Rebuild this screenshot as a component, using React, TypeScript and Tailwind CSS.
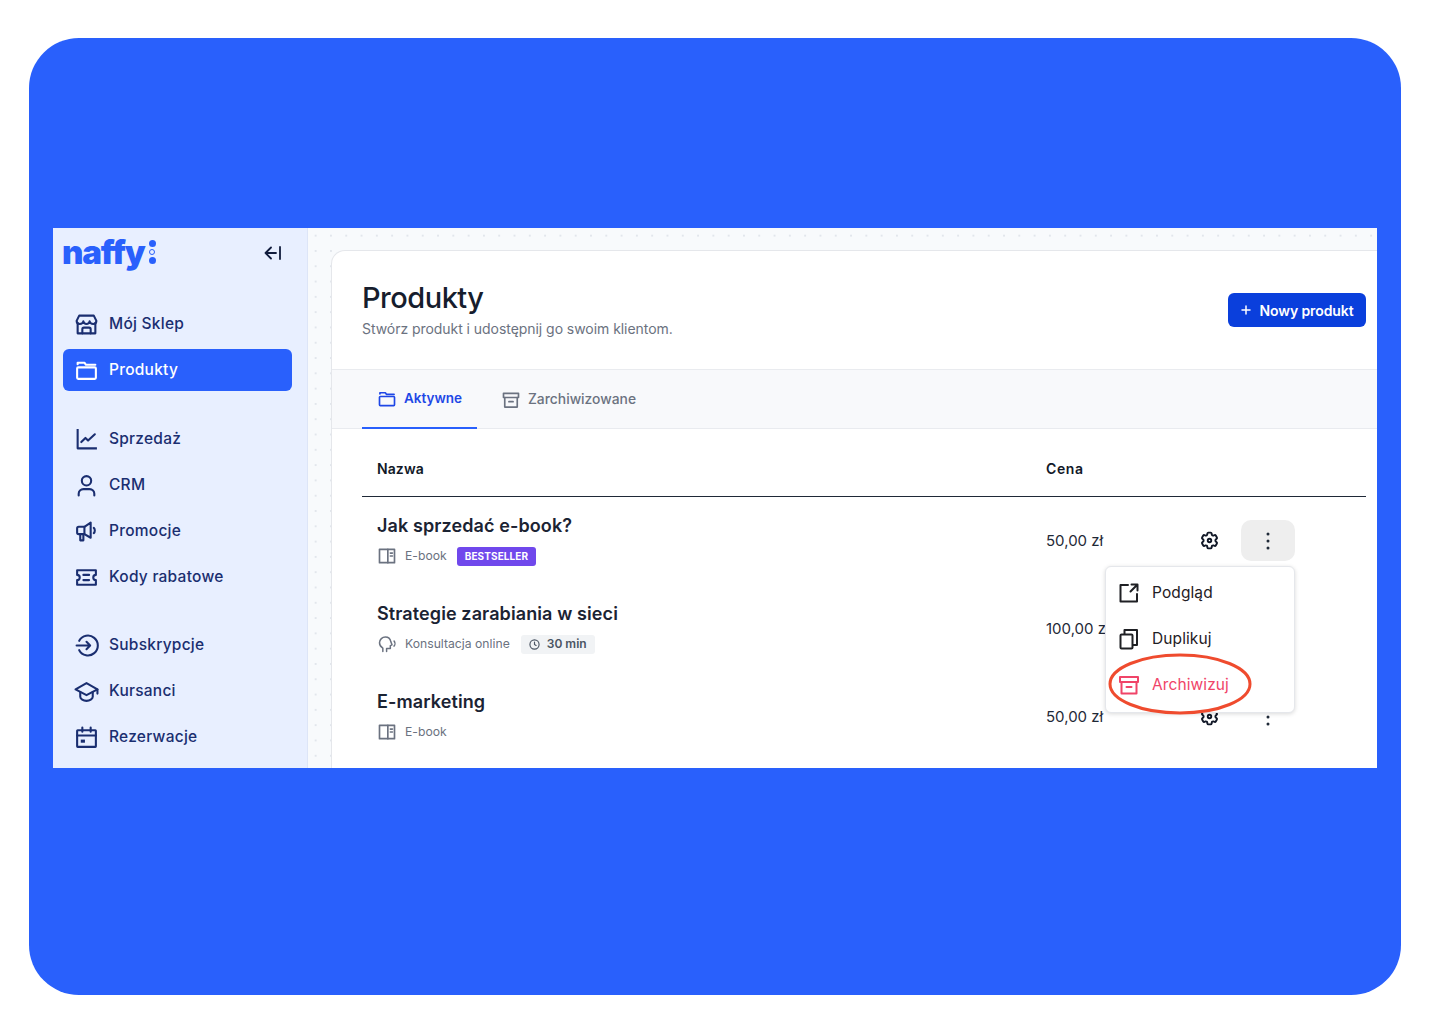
import React from "react";

const S = ({ className = "", children, w = 24, sw = 2 }: { className?: string; children: React.ReactNode; w?: number; sw?: number }) => (
  <svg width={w} height={w} viewBox="0 0 24 24" fill="none" stroke="currentColor" strokeWidth={sw} strokeLinecap="round" strokeLinejoin="round" className={className}>
    {children}
  </svg>
);

const IStore = () => (<S><path d="M3.5 10.5V20.5H20.500V10.500" /><path d="M2.500 8.500 L5 3.500H19L21.500 8.500C21.500 10.200 20.200 11.500 18.500 11.500C16.800 11.500 15.300 10.500 15 9C14.700 10.500 13.500 11.500 12 11.500C10.500 11.500 9.300 10.500 9 9C8.700 10.500 7.200 11.500 5.500 11.500C3.800 11.500 2.500 10.200 2.500 8.500Z" /><path d="M8 20.500V16.500C8 15.500 8.500 15 9.500 15H14.500C15.500 15 16 15.500 16 16.500V20.500" /></S>);
const IFolder = ({ w = 24, sw = 2 }: { w?: number; sw?: number }) => (<S w={w} sw={sw}><path d="M3.500 6V4.500H10L11.500 6.500H20.500" /><rect x="3" y="9" width="18" height="11" rx="1" /></S>);
const IChart = () => (<S><path d="M3.500 3V20.500H21" strokeLinecap="square" /><path d="M7 14.500L11 10.500L13.500 13L20 7" /></S>);
const IUser = () => (<S><circle cx="12" cy="7.500" r="4.500" /><path d="M4.500 21.500V20C4.500 17.500 6.500 15.500 9 15.500H15C17.500 15.500 19.500 17.500 19.500 20V21.500" /></S>);
const IMega = () => (<S><path d="M16 3.500V18L10 14.500H4.500C3.500 14.500 3 14 3 13V9C3 8 3.500 7.500 4.500 7.500H10L16 3.500Z" /><path d="M10 7.500V14.500" /><path d="M6 14.500V20.500H9V14.500" /><path d="M19 8.500C20.300 9.500 20.300 12.500 19 13.500" /></S>);
const ITicket = () => (<S><path d="M3 5H21V9.500C19.500 9.500 18.500 10.500 18.500 12C18.500 13.500 19.500 14.500 21 14.500V19H3V14.500C4.500 14.500 5.500 13.500 5.500 12C5.500 10.500 4.500 9.500 3 9.500Z" /><path d="M9 9.500H14.500M9 14.500H14.500" /></S>);
const ISub = () => (<S><path d="M5 7.500A9.500 9.500 0 1 1 5 16.500" /><path d="M2.500 12H15M12 8.500L15.500 12L12 15.500" /></S>);
const ICap = () => (<S><path d="M12 4L1.500 10L12 15.500L22.500 10Z" /><path d="M6 12.500V17C6 19 9 21 12 21C15 21 18 19 18 17V12.500" /><path d="M22.500 10V14" /></S>);
const ICal = () => (<S><rect x="3" y="5" width="18" height="16" rx="0.500" /><path d="M3 10H21M8 2.500V6.500M16 2.500V6.500" /><rect x="6.500" y="14" width="4" height="3" fill="currentColor" stroke="none" /></S>);
const IArchive = ({ sw = 2, w = 24 }: { sw?: number; w?: number }) => (<S sw={sw} w={w}><rect x="3" y="4" width="18" height="5" /><path d="M4.500 9V20.500H19.500V9" /><path d="M9.500 14H14.500" /></S>);
const IBook = () => (<S sw={2} w={20}><rect x="3" y="4" width="18" height="16" /><path d="M13 4V20" /><path d="M16 8.500H18.500M16 12H18.500" /></S>);
const IGear = () => (
  <svg width="21" height="21" viewBox="0 0 24 24" fill="none" stroke="currentColor" strokeWidth="2.200" strokeLinejoin="round">
    <path d="M9.594 3.94c.09-.542.56-.94 1.11-.94h2.593c.55 0 1.02.398 1.11.94l.213 1.281c.063.374.313.686.645.87.074.04.147.083.22.127.325.196.72.257 1.075.124l1.217-.456a1.125 1.125 0 0 1 1.37.49l1.296 2.247a1.125 1.125 0 0 1-.26 1.431l-1.003.827c-.293.241-.438.613-.43.992a7.723 7.723 0 0 1 0 .255c-.008.378.137.75.43.991l1.004.827c.424.35.534.955.26 1.43l-1.298 2.247a1.125 1.125 0 0 1-1.369.491l-1.217-.456c-.355-.133-.75-.072-1.076.124a6.47 6.47 0 0 1-.22.128c-.331.183-.581.495-.644.869l-.213 1.281c-.09.543-.56.94-1.11.94h-2.594c-.55 0-1.019-.398-1.11-.94l-.213-1.281c-.062-.374-.312-.686-.644-.87a6.52 6.52 0 0 1-.22-.127c-.325-.196-.72-.257-1.076-.124l-1.217.456a1.125 1.125 0 0 1-1.369-.49l-1.297-2.247a1.125 1.125 0 0 1 .26-1.431l1.004-.827c.292-.24.437-.613.43-.991a6.932 6.932 0 0 1 0-.255c.007-.38-.138-.751-.43-.992l-1.004-.827a1.125 1.125 0 0 1-.26-1.43l1.297-2.247a1.125 1.125 0 0 1 1.37-.491l1.216.456c.356.133.751.072 1.076-.124.072-.044.146-.086.22-.128.332-.183.582-.495.644-.869l.214-1.28Z" />
    <circle cx="12" cy="12" r="2" />
  </svg>
);
const Kebab = () => (
  <svg width="4" height="18" viewBox="0 0 4 18" fill="#1f2937"><circle cx="2" cy="2" r="1.500" /><circle cx="2" cy="9" r="1.500" /><circle cx="2" cy="16" r="1.500" /></svg>
);

function NavItem({ icon, label, active }: { icon: React.ReactNode; label: string; active?: boolean }) {
  return (
    <div className={`flex h-[42px] items-center gap-[13px] rounded-[6px] pl-[13px] text-[15.500px] font-medium tracking-[0.25px] ${active ? "bg-[#2960FC] text-white" : "text-[#1A2E70]"}`}>
      <span className="flex w-[20px] items-center justify-center [&>svg]:h-[25px] [&>svg]:w-[25px] [&>svg]:shrink-0">{icon}</span>
      <span>{label}</span>
    </div>
  );
}

function Row({ title, type, icon, tag, price, actionsActive }: { title: string; type: string; icon: React.ReactNode; tag?: React.ReactNode; price: string; actionsActive?: boolean }) {
  return (
    <div className="flex h-[88px] items-start pl-[15px]">
      <div className="w-[669px] pt-[17px]">
        <div className="text-[18px] font-semibold leading-[24px] tracking-[0.1px] text-[#1b2333]">{title}</div>
        <div className="mt-[8px] flex h-[20px] items-center text-[12.200px] text-[#6b7280]">
          <span className="flex w-[20px] items-center justify-center text-[#6b7280]">{icon}</span>
          <span className="ml-[8px]">{type}</span>
          {tag}
        </div>
      </div>
      <div className="w-[131px] pt-[32px] text-[15px] leading-[24px] text-[#1f2937]">{price}</div>
      <div className="mt-[23px] flex items-center">
        <span className="flex h-[41px] w-[64px] items-center justify-center text-[#111827]"><IGear /></span>
        <span className={`flex h-[41px] w-[54px] items-center justify-center rounded-[10px] ${actionsActive ? "bg-[#EEEEEE]" : ""}`}><Kebab /></span>
      </div>
    </div>
  );
}

function MenuItem({ icon, label, danger }: { icon: React.ReactNode; label: string; danger?: boolean }) {
  return (
    <div className={`flex h-[46px] items-center gap-[11px] pl-[11px] text-[15.500px] tracking-[0.1px] ${danger ? "text-[#F04468]" : "text-[#1f2024]"}`}>
      {icon}
      <span>{label}</span>
    </div>
  );
}

export default function App() {
  return (
    <div className="h-[1024px] w-[1440px] overflow-hidden bg-white pl-[29px] pt-[38px] font-['Inter','Liberation_Sans',sans-serif]">
      <div className="h-[957px] w-[1372px] rounded-[50px] bg-[#2960FC] px-[24px] pt-[190px]">
        <div className="flex h-[540px] w-[1324px] overflow-hidden bg-white">
          <aside className="w-[255px] shrink-0 border-r border-[#DDE5F7] bg-[#E8EFFF] pl-[10px] pr-[15px]">
            <div className="flex h-[50px] items-center justify-between pr-[10px]">
              <div className="-ml-[1px] -mt-[2px] flex items-center text-[#2960FC]">
                <span className="text-[33px] font-black leading-[36px] tracking-[-1.200px]">naffy</span>
                <span className="ml-[4px] flex flex-col items-center gap-[2px]">
                  <span className="h-[7px] w-[7px] rounded-full bg-[#2960FC]" />
                  <span className="h-[6px] w-[6px] rounded-full border border-[#2960FC]" />
                  <span className="h-[7px] w-[7px] rounded-full bg-[#2960FC]" />
                </span>
              </div>
              <svg width="18" height="14" viewBox="0 0 18 14" fill="none" stroke="#111C3D" strokeWidth="1.800" strokeLinecap="round" strokeLinejoin="round">
                <path d="M12 7H1.500M7 1.500L1.500 7L7 12.500M16 1V13" />
              </svg>
            </div>
            <nav className="mt-[25px] flex flex-col gap-[4px]">
              <NavItem icon={<IStore />} label="Mój Sklep" />
              <NavItem icon={<IFolder />} label="Produkty" active />
              <div className="h-[19px]" />
              <NavItem icon={<IChart />} label="Sprzedaż" />
              <NavItem icon={<IUser />} label="CRM" />
              <NavItem icon={<IMega />} label="Promocje" />
              <NavItem icon={<ITicket />} label="Kody rabatowe" />
              <div className="h-[18px]" />
              <NavItem icon={<ISub />} label="Subskrypcje" />
              <NavItem icon={<ICap />} label="Kursanci" />
              <NavItem icon={<ICal />} label="Rezerwacje" />
            </nav>
          </aside>
          <main className="min-w-0 flex-1 bg-[#F8FAFC] bg-[radial-gradient(#E2E6EC_1px,transparent_1.200px)] bg-[length:15.300px_15.300px] pl-[23px] pt-[22px]">
            <div className="relative h-[520px] rounded-tl-[14px] border-l border-t border-[#E5E7EB] bg-white">
              <div className="flex h-[118px] items-start justify-between pl-[30px] pr-[11px]">
                <div className="pt-[28px]">
                  <h1 className="text-[29px] font-medium leading-[38px] tracking-[-0.500px] text-[#161D2D]">Produkty</h1>
                  <p className="mt-[2px] text-[14px] leading-[20px] tracking-[-0.050px] text-[#6b7280]">Stwórz produkt i udostępnij go swoim klientom.</p>
                </div>
                <button className="mt-[42px] flex h-[34px] w-[138px] items-center justify-center gap-[9px] rounded-[6px] bg-[#0A3FDC] text-[14px] font-semibold tracking-[-0.100px] text-white">
                  <svg width="10" height="10" viewBox="0 0 10 10" stroke="white" strokeWidth="1.500" strokeLinecap="round"><path d="M5 1V9M1 5H9" /></svg>
                  Nowy produkt
                </button>
              </div>
              <div className="flex h-[60px] border-y border-[#E9EBEF] bg-[#F8F9FB] pl-[30px]">
                <div className="flex h-[59px] w-[115px] items-center justify-center gap-[7px] border-b-2 border-[#2960FC] text-[13.500px] font-semibold text-[#1E47E6]">
                  <IFolder w={20} />
                  Aktywne
                </div>
                <div className="ml-[24px] flex h-[59px] items-center gap-[7px] text-[13.850px] font-medium text-[#6b7280]">
                  <IArchive w={20} />
                  Zarchiwizowane
                </div>
              </div>
              <div className="pl-[30px] pr-[11px]">
                <div className="flex h-[68px] items-end border-b border-[#1f2937] pb-[17px] pl-[15px] text-[14px] font-semibold tracking-[0.1px] text-[#111827]">
                  <span className="w-[669px]">Nazwa</span>
                  <span className="tracking-[0.6px]">Cena</span>
                </div>
                <Row title="Jak sprzedać e-book?" type="E-book" icon={<IBook />} price="50,00 zł" actionsActive tag={
                  <span className="ml-[10px] flex h-[19px] items-center rounded-[3px] bg-[#7048EC] px-[8px] text-[10px] font-bold tracking-[0.1px] text-white">BESTSELLER</span>
                } />
                <Row title="Strategie zarabiania w sieci" type="Konsultacja online" price="100,00 zł" icon={
                  <S w={20} sw={1.800}><path d="M7 21V17C4.500 15.500 3 13 3 10.500C3 6.500 6.500 3.500 10 3.500C13.500 3.500 16 6 16.500 9L18 13L16 14V17.500H11.500V21" /><path d="M20.500 8.500C21.800 10 21.800 13 20.500 14.500" /></S>
                } tag={
                  <span className="ml-[11px] flex h-[19px] items-center gap-[7px] rounded-[3px] bg-[#F1F3F5] px-[8px] text-[12px] font-semibold text-[#4b5563]">
                    <S w={11} sw={2.500}><circle cx="12" cy="12" r="10" /><path d="M12 6.500V12L15.500 14" /></S>
                    30 min
                  </span>
                } />
                <Row title="E-marketing" type="E-book" icon={<IBook />} price="50,00 zł" />
              </div>
              <div className="absolute left-[773px] top-[315px] h-[147px] w-[190px] rounded-[6px] border border-[#E5E7EB] bg-white py-[3px] shadow-[0_1px_4px_rgba(0,0,0,0.15)]">
                <MenuItem label="Podgląd" icon={<S sw={2}><path d="M11 4H3.500V20.500H20V13" /><path d="M13.500 10.500L20 4M14.500 3.500H20.500V9.500" /></S>} />
                <MenuItem label="Duplikuj" icon={<S sw={2}><rect x="3.500" y="7.500" width="12" height="14" rx="1" /><path d="M7.500 7V3H20V18H16" /></S>} />
                <MenuItem label="Archiwizuj" danger icon={<IArchive />} />
              </div>
              <svg className="absolute left-[774px] top-[401px]" width="148" height="64" viewBox="0 0 148 64" fill="none">
                <ellipse cx="74" cy="32" rx="70" ry="29" stroke="#EF4B2E" strokeWidth="3" />
              </svg>
            </div>
          </main>
        </div>
      </div>
    </div>
  );
}
